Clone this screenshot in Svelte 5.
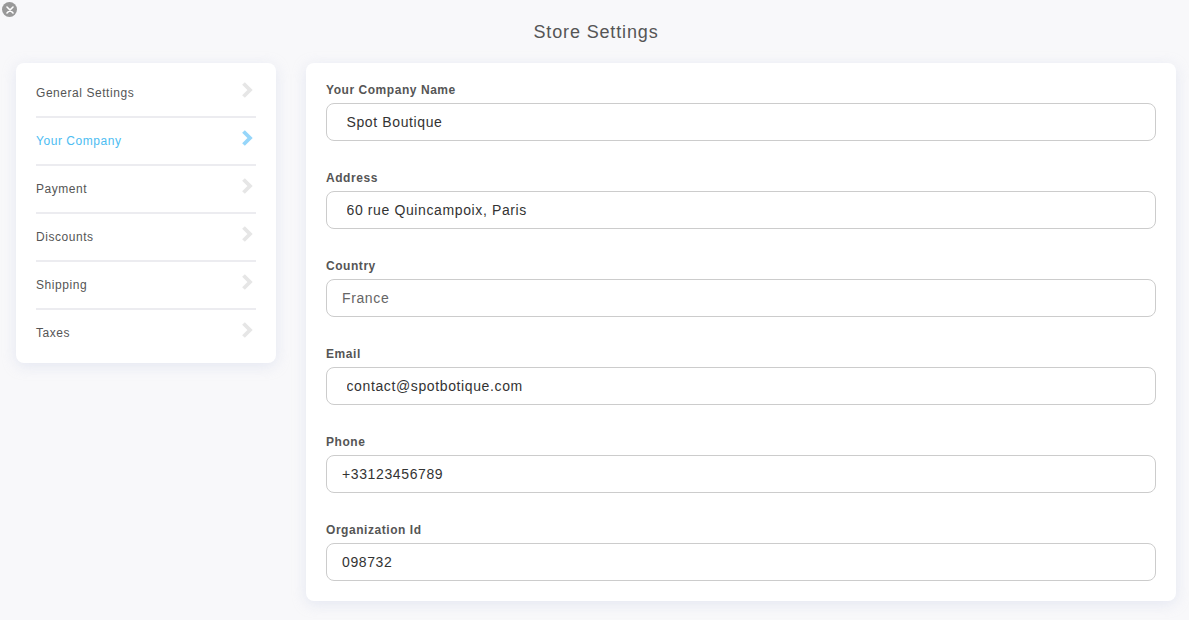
<script>
    const menu = ["General Settings", "Your Company", "Payment", "Discounts", "Shipping", "Taxes"];
    const active = "Your Company";

    const fields = [
        { label: "Your Company Name", value: "Spot Boutique", indent: true },
        { label: "Address", value: "60 rue Quincampoix, Paris", indent: true },
        { label: "Country", value: "France", muted: true },
        { label: "Email", value: "contact@spotbotique.com", indent: true },
        { label: "Phone", value: "+33123456789" },
        { label: "Organization Id", value: "098732" }
    ];
</script>

<div class="page">
    <button class="close" aria-label="Close">
        <svg width="8" height="8" viewBox="0 0 8 8">
            <path d="M1 1 7 7M7 1 1 7" stroke="#fff" stroke-width="1.6" stroke-linecap="round" />
        </svg>
    </button>

    <h1 class="title">Store Settings</h1>

    <div class="layout">
        <nav class="card menu">
            {#each menu as item}
                <div class="item" class:active={item === active}>
                    <span>{item}</span>
                    <svg class="chevron" width="12" height="16" viewBox="0 0 12 16">
                        <path d="M2.500 1.500 9 8l-6.500 6.500" fill="none" stroke="currentColor" stroke-width="3.800" />
                    </svg>
                </div>
            {/each}
        </nav>

        <form class="card form">
            {#each fields as field}
                <div class="field">
                    <label for={field.label}>{field.label}</label>
                    <input
                        id={field.label}
                        type="text"
                        value={field.value}
                        class:indent={field.indent}
                        class:muted={field.muted}
                    />
                </div>
            {/each}
        </form>
    </div>
</div>

<style>
    :global(body) {
        background: #f8f8fa;
    }
    .page {
        position: relative;
        height: 620px;
        overflow: hidden;
        font-family: "Liberation Sans", Arial, sans-serif;
        letter-spacing: 0.55px;
    }
    .close {
        position: absolute;
        top: 2px;
        left: 2px;
        width: 15px;
        height: 15px;
        padding: 0;
        border: 0;
        border-radius: 50%;
        background: #999;
        display: flex;
        align-items: center;
        justify-content: center;
    }
    .title {
        margin: 0;
        padding-top: 22px;
        padding-left: 3px;
        height: 63px;
        box-sizing: border-box;
        text-align: center;
        font-size: 18px;
        line-height: 21px;
        font-weight: 400;
        color: #555;
        letter-spacing: 0.85px;
    }
    .layout {
        display: flex;
        align-items: flex-start;
        gap: 30px;
        padding: 0 13px 0 16px;
    }
    .card {
        background: #fff;
        border-radius: 8px;
        box-shadow: 0 3px 14px rgba(220, 224, 238, 0.7);
    }
    .menu {
        width: 260px;
        flex: none;
        box-sizing: border-box;
        padding: 7px 20px;
    }
    .item {
        display: flex;
        align-items: center;
        justify-content: space-between;
        padding-bottom: 1px;
        box-sizing: border-box;
        height: 48px;
        border-bottom: 2px solid #ececf0;
        font-size: 12px;
        color: #555;
    }
    .item:last-child {
        border-bottom: 0;
        height: 46px;
    }
    .item.active {
        color: #4dbdf2;
    }
    .chevron {
        margin: -6px 3px 0 0;
        color: #e6e6e6;
    }
    .active .chevron {
        color: #96d6fa;
    }
    .form {
        flex: 1;
        padding: 20px;
        display: flex;
        flex-direction: column;
        gap: 30px;
    }
    .field {
        display: flex;
        flex-direction: column;
    }
    label {
        font-size: 12px;
        line-height: 14px;
        font-weight: 700;
        color: #555;
        margin-bottom: 6px;
    }
    input {
        box-sizing: border-box;
        height: 38px;
        padding: 0 15px;
        border: 1px solid #ccc;
        border-radius: 8px;
        background: #fff;
        font: inherit;
        font-size: 14px;
        letter-spacing: 0.62px;
        color: #333;
        outline: none;
    }
    input.indent {
        padding-left: 19.5px;
    }
    input.muted {
        color: #666;
    }
</style>
